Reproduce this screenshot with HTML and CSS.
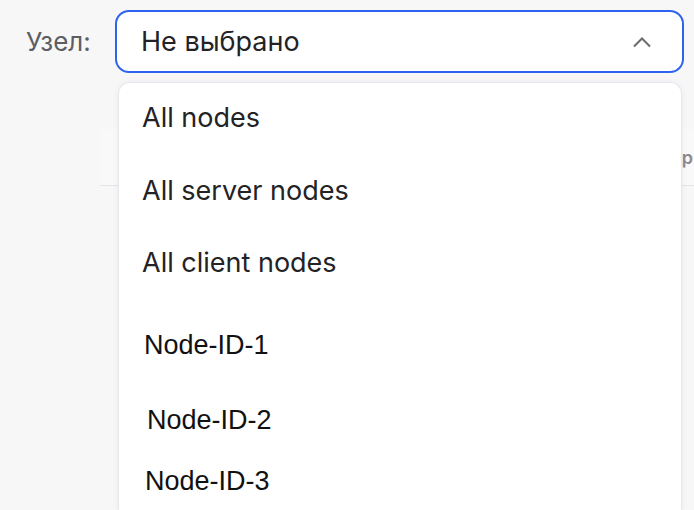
FILE: index.html
```html
<!DOCTYPE html>
<html lang="ru">
<head>
<meta charset="utf-8">
<link rel="stylesheet" href="styles.css">
</head>
<body>
<div class="page">
  <div class="filter">
    <span class="label">Узел:</span>
    <div class="select">
      <span class="value">Не выбрано</span>
      <svg class="chevron" width="20" height="12" viewBox="0 0 20 12"><path d="M2 10.5 L10 2.5 L18 10.5" fill="none" stroke="#6b6b6b" stroke-width="2"/></svg>
    </div>
  </div>
  <div class="table">
    <div class="thead">
      <span class="th th-a">Время</span>
      <span class="th th-b">Сервер</span>
    </div>
  </div>
  <ul class="menu">
    <li class="opt">All nodes</li>
    <li class="opt">All server nodes</li>
    <li class="opt">All client nodes</li>
    <li class="opt id id1">Node-ID-1</li>
    <li class="opt id id2">Node-ID-2</li>
    <li class="opt id id3">Node-ID-3</li>
  </ul>
</div>
</body>
</html>
```

FILE: styles.css
```css
html, body {
  margin: 0;
  padding: 0;
  background: #f7f7f8;
  width: 694px;
  height: 510px;
  overflow: hidden;
}
.page {
  position: relative;
  width: 694px;
  height: 510px;
  overflow: hidden;
  font-family: "Inter", "Noto Sans", sans-serif;
}
.filter {
  display: flex;
  align-items: center;
  padding: 10px 10px 0 26px;
}
.label {
  width: 89px;
  font-size: 26px;
  color: #5d5d62;
}
.select {
  box-sizing: border-box;
  width: 569px;
  height: 63px;
  border: 2px solid #2d63ee;
  border-radius: 14px;
  background: #fff;
  display: flex;
  align-items: center;
  justify-content: space-between;
  padding: 0 30px 0 24px;
}
.value {
  font-size: 27px;
  color: #232325;
}
.chevron {
  display: block;
}
.table {
  margin: 56px 0 0 100px;
  background: #f9f9fa;
}
.thead {
  height: 56px;
  border-bottom: 1px solid #e4e5ea;
  display: flex;
  align-items: center;
  font-size: 18px;
  font-weight: 600;
  color: #8a8a90;
}
.th-a { margin-left: 20px; }
.th-b { margin-left: auto; margin-right: 1px; }
.menu {
  position: absolute;
  left: 118px;
  top: 82px;
  width: 564px;
  height: 428px;
  margin: 0;
  padding: 0;
  list-style: none;
  box-sizing: border-box;
  background: #fff;
  border: 1px solid #e7e8ec;
  border-bottom: none;
  border-radius: 12px 12px 0 0;
  box-shadow: 0 0 6px rgba(30, 40, 80, 0.06);
  overflow: hidden;
}
.opt {
  font-size: 27px;
  color: #232325;
  padding-left: 23px;
  height: 72px;
  line-height: 72px;
}
.opt:first-child {
  line-height: 70px;
}
.id {
  font-family: "Liberation Sans", Arial, sans-serif;
  font-size: 27px;
  color: #111;
}
.id1 { padding-left: 25px; margin-top: 10px; }
.id2 { padding-left: 28px; margin-top: 3px; }
.id3 { padding-left: 26px; height: 50px; line-height: 50px; }
```
